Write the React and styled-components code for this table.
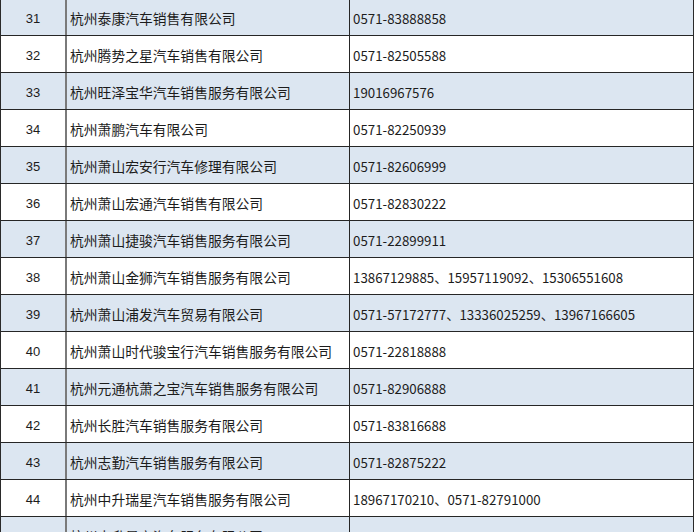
import React from "react";
import styled, { createGlobalStyle } from "styled-components";

const Global = createGlobalStyle`
  html, body { margin: 0; padding: 0; background: #ffffff; overflow: hidden; }
  body { font-family: "Noto Sans CJK SC", "Noto Sans", sans-serif; color: #1c1c1c; }
`;

const Table = styled.div`
  width: 694px;
  margin-top: -2px;
  border-left: 1px solid #2a2a2a;
  border-right: 1px solid #2a2a2a;
  box-sizing: border-box;
  display: flex;
  flex-direction: column;
`;

const Row = styled.div`
  display: grid;
  grid-template-columns: 66px 283px 1fr;
  height: 37px;
  box-sizing: border-box;
  border-top: 1px solid #262626;
  background: ${(p) => (p.$shaded ? "#dce6f1" : "#ffffff")};
`;

const NumCell = styled.div`
  display: flex;
  align-items: center;
  justify-content: center;
  font-family: "Liberation Sans", "Noto Sans CJK SC", sans-serif;
  font-size: 13px;
  padding-top: 2px;
  border-right: 2px solid #7a7a7a;
`;

const NameCell = styled.div`
  display: flex;
  align-items: center;
  padding-left: 3px;
  padding-top: 2px;
  font-size: 13.8px;
  white-space: nowrap;
  border-right: 1px solid #262626;
`;

const PhoneCell = styled.div`
  display: flex;
  align-items: center;
  padding-left: 3px;
  padding-top: 2px;
  font-size: 13.3px;
  white-space: nowrap;
`;

const rows = [
  [31, "杭州泰康汽车销售有限公司", "0571-83888858"],
  [32, "杭州腾势之星汽车销售有限公司", "0571-82505588"],
  [33, "杭州旺泽宝华汽车销售服务有限公司", "19016967576"],
  [34, "杭州萧鹏汽车有限公司", "0571-82250939"],
  [35, "杭州萧山宏安行汽车修理有限公司", "0571-82606999"],
  [36, "杭州萧山宏通汽车销售有限公司", "0571-82830222"],
  [37, "杭州萧山捷骏汽车销售服务有限公司", "0571-22899911"],
  [38, "杭州萧山金狮汽车销售服务有限公司", "13867129885、15957119092、15306551608"],
  [39, "杭州萧山浦发汽车贸易有限公司", "0571-57172777、13336025259、13967166605"],
  [40, "杭州萧山时代骏宝行汽车销售服务有限公司", "0571-22818888"],
  [41, "杭州元通杭萧之宝汽车销售服务有限公司", "0571-82906888"],
  [42, "杭州长胜汽车销售服务有限公司", "0571-83816688"],
  [43, "杭州志勤汽车销售服务有限公司", "0571-82875222"],
  [44, "杭州中升瑞星汽车销售服务有限公司", "18967170210、0571-82791000"],
  [45, "杭州中升星宇汽车服务有限公司", "0571-22911777"],
];

export default function App() {
  return (
    <>
      <Global />
      <Table>
        {rows.map(([n, name, phone]) => (
          <Row key={n} $shaded={n % 2 === 1}>
            <NumCell>{n}</NumCell>
            <NameCell>{name}</NameCell>
            <PhoneCell>{phone}</PhoneCell>
          </Row>
        ))}
      </Table>
    </>
  );
}
